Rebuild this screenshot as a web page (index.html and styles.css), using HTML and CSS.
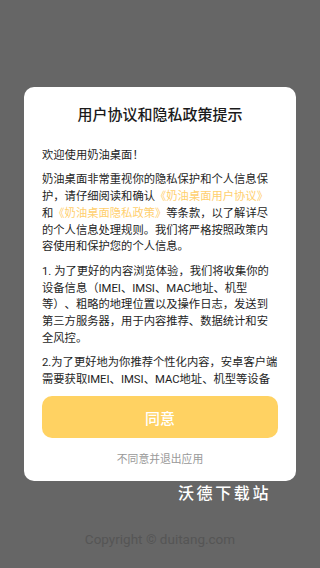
FILE: index.html
```html
<!DOCTYPE html>
<html lang="zh-CN">
<head>
<meta charset="utf-8">
<meta name="viewport" content="width=device-width, initial-scale=1">
<title>用户协议和隐私政策提示</title>
<link rel="stylesheet" href="styles.css">
</head>
<body>
<div class="screen">
  <div class="dialog">
    <h1 class="dialog-title">用户协议和隐私政策提示</h1>
    <div class="dialog-body">
      <p>欢迎使用奶油桌面！</p>
      <p>奶油桌面非常重视你的隐私保护和个人信息保<br>护，请仔细阅读和确认<span class="link">《奶油桌面用户协议》</span><br>和<span class="link">《奶油桌面隐私政策》</span>等条款，以了解详尽<br>的个人信息处理规则。我们将严格按照政策内<br>容使用和保护您的个人信息。</p>
      <p>1. 为了更好的内容浏览体验，我们将收集你的<br>设备信息（IMEI、IMSI、MAC地址、机型<br>等）、粗略的地理位置以及操作日志，发送到<br>第三方服务器，用于内容推荐、数据统计和安<br>全风控。</p>
      <p>2.为了更好地为你推荐个性化内容，安卓客户端<br>需要获取IMEI、IMSI、MAC地址、机型等设备<br>信息。</p>
    </div>
    <button class="btn-agree" type="button">同意</button>
    <div class="btn-refuse">不同意并退出应用</div>
  </div>
  <div class="watermark">沃德下载站</div>
  <div class="copyright">Copyright © duitang.com</div>
</div>
</body>
</html>
```
FILE: styles.css
```css
html, body {
  margin: 0;
  padding: 0;
  background: #666666;
}
.screen {
  position: relative;
  width: 320px;
  height: 568px;
  overflow: hidden;
  padding-top: 87px;
  box-sizing: border-box;
  font-family: Roboto, "Noto Sans CJK SC", sans-serif;
}
.dialog {
  margin: 0 24px;
  height: 394px;
  background: #ffffff;
  border-radius: 10px;
  box-sizing: border-box;
  padding: 17px 18px 13px;
  display: flex;
  flex-direction: column;
}
.dialog-title {
  margin: 0 0 22px;
  font-size: 15px;
  line-height: 22px;
  font-weight: 500;
  color: #1a1a1a;
  text-align: center;
}
.dialog-body {
  height: 236px;
  margin-right: -3px;
  overflow: hidden;
  font-size: 11.3px;
  line-height: 16.8px;
  color: #1e1e1e;
  text-spacing-trim: space-all;
}
.dialog-body p {
  margin: 0 0 7.5px;
}
.link {
  color: #ffcf6e;
}
.btn-agree {
  margin-top: 12px;
  height: 42px;
  border: none;
  border-radius: 10px;
  background: #ffd262;
  color: #ffffff;
  font-family: inherit;
  font-size: 15px;
  font-weight: 500;
  padding: 0;
}
.btn-refuse {
  margin-top: 14px;
  line-height: 16px;
  font-size: 10.8px;
  color: #999999;
  text-align: center;
}
.watermark {
  position: absolute;
  left: 178px;
  top: 484px;
  font-size: 16px;
  line-height: 20px;
  letter-spacing: 2.6px;
  color: #ffffff;
  font-weight: 500;
}
.copyright {
  margin-top: 50px;
  text-align: center;
  font-size: 13.5px;
  line-height: 16px;
  color: #555555;
}
```
